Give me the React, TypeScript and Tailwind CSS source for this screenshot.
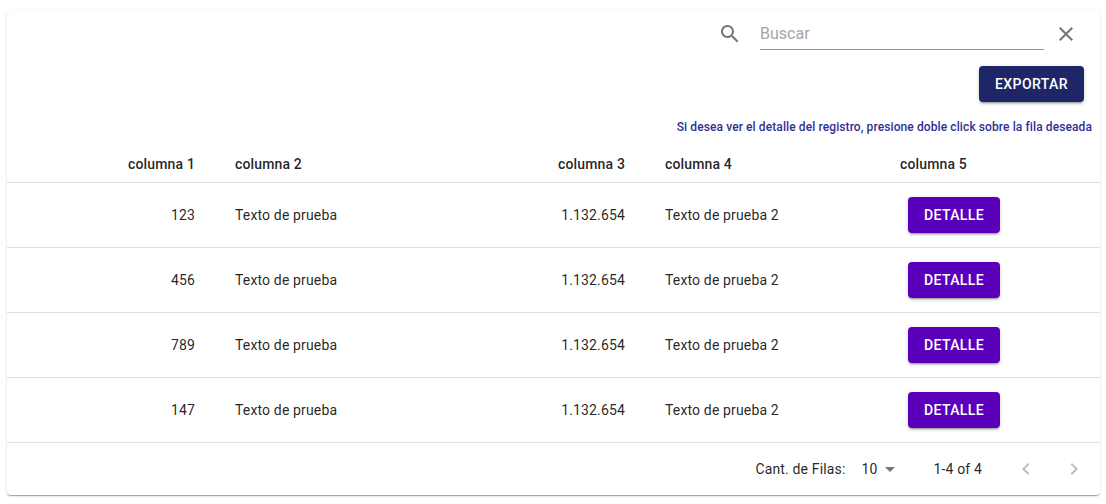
const rows = ['123', '456', '789', '147'];

function Icon({ d, className }: { d: string; className: string }) {
  return (
    <svg viewBox="0 0 24 24" className={className} fill="currentColor">
      <path d={d} />
    </svg>
  );
}

const raised =
  'shadow-[0px_3px_1px_-2px_rgba(0,0,0,0.2),0px_2px_2px_0px_rgba(0,0,0,0.14),0px_1px_5px_0px_rgba(0,0,0,0.12)]';
const grid = 'grid grid-cols-[215px_323px_107px_235px_1fr] items-center border-b border-[#e0e0e0]';

export default function App() {
  return (
    <div className="h-[504px] w-[1106px] bg-white pt-[10px] pl-[7px] font-['Roboto',sans-serif] text-[14px] text-black/87">
      <div className="flex h-[485px] w-[1093px] flex-col rounded bg-white shadow-[0px_2px_1px_-1px_rgba(0,0,0,0.2),0px_1px_1px_0px_rgba(0,0,0,0.14),0px_1px_3px_0px_rgba(0,0,0,0.12)]">
        <div className="flex h-[56px] items-start justify-end pr-[22px] text-black/54">
          <Icon
            className="mt-[12px] mr-[18px] size-6"
            d="M15.5 14h-.79l-.28-.27C15.41 12.59 16 11.11 16 9.5 16 5.91 13.09 3 9.5 3S3 5.91 3 9.5 5.91 16 9.5 16c1.61 0 3.09-.59 4.23-1.57l.27.28v.79l5 4.99L20.49 19l-4.99-5zm-6 0C7.01 14 5 11.99 5 9.5S7.01 5 9.5 5 14 7.01 14 9.5 11.99 14 9.5 14z"
          />
          <input
            placeholder="Buscar"
            className="mt-[8px] h-[32px] w-[284px] border-b border-[#949494] text-[16px] outline-none placeholder:text-[#a5a5a5]"
          />
          <Icon
            className="mt-[12px] ml-[10px] size-6"
            d="M19 6.41L17.59 5 12 10.59 6.41 5 5 6.41 10.59 12 5 17.59 6.41 19 12 13.41 17.59 19 19 17.59 13.41 12z"
          />
        </div>
        <div className="flex h-[36px] justify-end pr-[16px]">
          <button className={`h-[36px] w-[105px] rounded bg-[#1f2667] font-medium tracking-[0.4px] text-white ${raised}`}>
            EXPORTAR
          </button>
        </div>
        <div className="flex h-[43px] items-start justify-end pt-[15px] pr-[8px] text-[12px] leading-[20px] font-medium tracking-[0.1px] text-[#303094]">
          Si desea ver el detalle del registro, presione doble click sobre la fila deseada
        </div>
        <div className={`h-[38px] pt-px font-medium tracking-[0.15px] ${grid}`}>
          <div className="pr-[27px] text-right">columna 1</div>
          <div className="pl-[13px]">columna 2</div>
          <div className="pr-[27px] text-right">columna 3</div>
          <div className="pl-[13px]">columna 4</div>
          <div className="pl-[13px]">columna 5</div>
        </div>
        {rows.map((id) => (
          <div key={id} className={`h-[65px] tracking-[0.15px] ${grid}`}>
            <div className="pr-[27px] text-right">{id}</div>
            <div className="pl-[13px]">Texto de prueba</div>
            <div className="pr-[27px] text-right">1.132.654</div>
            <div className="pl-[13px]">Texto de prueba 2</div>
            <div className="pl-[21px]">
              <button className={`block h-[36px] w-[92px] rounded bg-[#5a00ba] font-medium tracking-[0.4px] text-white ${raised}`}>
                DETALLE
              </button>
            </div>
          </div>
        ))}
        <div className="flex h-[52px] items-center justify-end pr-[14px] tracking-[0.15px]">
          <span>Cant. de Filas:</span>
          <span className="ml-[16px]">10</span>
          <Icon className="size-6 text-black/54" d="M7 10l5 5 5-5z" />
          <span className="ml-[32px]">1-4 of 4</span>
          <Icon className="ml-[32px] size-6 text-black/26" d="M15.41 7.41L14 6l-6 6 6 6 1.41-1.41L10.83 12z" />
          <Icon className="ml-[24px] size-6 text-black/26" d="M10 6L8.59 7.41 13.17 12l-4.58 4.59L10 18l6-6z" />
        </div>
      </div>
    </div>
  );
}
